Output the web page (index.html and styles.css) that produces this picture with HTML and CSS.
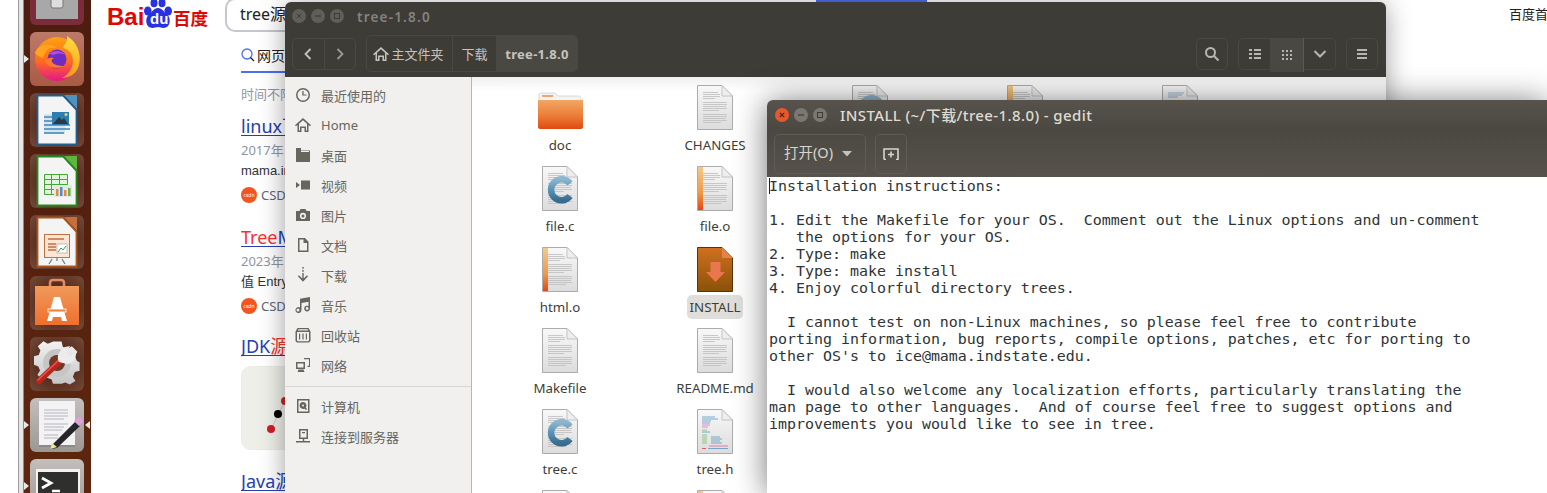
FILE: index.html
```html
<!DOCTYPE html>
<html lang="zh">
<head>
<meta charset="utf-8">
<title>tree-1.8.0</title>
<link rel="stylesheet" href="styles.css">
</head>
<body>
<svg class="defs" width="0" height="0" aria-hidden="true">
  <defs>
    <linearGradient id="paper" x1="0" y1="0" x2="0" y2="1"><stop offset="0" stop-color="#f8f8f8"/><stop offset="1" stop-color="#dcdcdc"/></linearGradient>
    <linearGradient id="stripe" x1="0" y1="0" x2="0" y2="1"><stop offset="0" stop-color="#f3c98a"/><stop offset=".6" stop-color="#ee9a4a"/><stop offset="1" stop-color="#e5480f"/></linearGradient>
    <linearGradient id="cblue" x1="0" y1="0" x2="0" y2="1"><stop offset="0" stop-color="#8db6cf"/><stop offset=".5" stop-color="#5a93b6"/><stop offset="1" stop-color="#396c8f"/></linearGradient>
    <linearGradient id="brown" x1="0" y1="0" x2="0" y2="1"><stop offset="0" stop-color="#d0701f"/><stop offset="1" stop-color="#8a5208"/></linearGradient>
    <linearGradient id="folder" x1="0" y1="0" x2="0" y2="1"><stop offset="0" stop-color="#f1a765"/><stop offset=".55" stop-color="#ec7c37"/><stop offset="1" stop-color="#df4a10"/></linearGradient>
    <linearGradient id="ffbody" x1="0" y1="0" x2="0" y2="1"><stop offset="0" stop-color="#ffa010"/><stop offset=".55" stop-color="#ff6a20"/><stop offset="1" stop-color="#e8158a"/></linearGradient>
    <linearGradient id="fftail" x1="0" y1="0" x2="0" y2="1"><stop offset="0" stop-color="#ffdc40"/><stop offset="1" stop-color="#ff9a1c"/></linearGradient>
    <linearGradient id="bag" x1="0" y1="0" x2="0" y2="1"><stop offset="0" stop-color="#f09a5c"/><stop offset="1" stop-color="#f06f2c"/></linearGradient>
    <linearGradient id="gear" x1="0" y1="0" x2="0" y2="1"><stop offset="0" stop-color="#f2f2f2"/><stop offset="1" stop-color="#c4c4c4"/></linearGradient>
    <symbol id="doc" viewBox="0 0 36 45">
      <path d="M.5.5H25L35.5 11V44.5H.5Z" fill="url(#paper)" stroke="#ababab"/>
      <path d="M25 .5V11H35.5Z" fill="#eeeeee" stroke="#c4c4c4"/>
    </symbol>
    <symbol id="lines" viewBox="0 0 36 45">
      <path d="M6 7.500h15M6 9.500h17M6 11.500h17M6 13.500h12M6 17.500h24M6 19.500h24M6 21.500h23M6 23.500h24M6 25.500h16M6 29.500h24M6 31.500h24M6 33.500h23M6 35.500h24M6 37.500h18" stroke="#bdbdbd" stroke-width=".8" fill="none"/>
    </symbol>
    <symbol id="cmark" viewBox="0 0 36 45">
      <path d="M28 17.500A10.500 10.500 0 1 0 28 30" fill="none" stroke="url(#cblue)" stroke-width="6.500"/>
    </symbol>
    <symbol id="sun" viewBox="0 0 16 16"><path d="M8 1a7 7 0 1 0 0 14A7 7 0 0 0 8 1Zm0 1.500a5.500 5.500 0 1 1 0 11 5.500 5.500 0 0 1 0-11ZM7.300 4v4.600H11.500V7.400H8.600V4Z"/></symbol>
    <symbol id="home" viewBox="0 0 16 16"><path d="M8 1 0 8.300l1 1 1.500-1.300V15h4v-4h3v4h4V8l1.500 1.300 1-1ZM4 6.800 8 3.200l4 3.600v6.700h-1v-4H5v4H4Z"/></symbol>
    <symbol id="desk" viewBox="0 0 16 16"><path d="M1 1h5v2.500h9V15H1Zm2 4h11V4H6v1Z"/></symbol>
    <symbol id="video" viewBox="0 0 16 16"><path d="M6 3.500h9v9H6ZM1 5l4 3-4 3Z"/></symbol>
    <symbol id="cam" viewBox="0 0 16 16"><path d="M5.500 2h5l1 2H15v10H1V4h3.500ZM8 5.800a3.100 3.100 0 1 0 0 6.200 3.100 3.100 0 0 0 0-6.200Zm0 1.600a1.500 1.500 0 1 1 0 3 1.500 1.500 0 0 1 0-3Z"/></symbol>
    <symbol id="file" viewBox="0 0 16 16"><path d="M3 1h7l3.500 3.500V15H3Zm1.500 1.500v11h7.500V6H8.500V2.500Z"/></symbol>
    <symbol id="down" viewBox="0 0 16 16"><path d="M7.300 0h1.400v1.800H7.300Zm0 3h1.400v1.800H7.300Zm0 3h1.400v5.500l3.300-3.300 1 1L8 14.800 2.900 9.200l1-1 3.400 3.300Z"/></symbol>
    <symbol id="music" viewBox="0 0 16 16"><path d="M5 1.800 15 0v11.500a2.900 2.900 0 1 1-1.500-2.500V4.800L6.500 6v7a3 3 0 1 1-1.500-2.500Zm-2 9.700a1.500 1.500 0 1 0 0 3 1.500 1.500 0 0 0 0-3Zm9.100-1.400a1.400 1.400 0 1 0 0 2.800 1.400 1.400 0 0 0 0-2.800Z"/></symbol>
    <symbol id="trash" viewBox="0 0 16 16"><path d="M2.500 1h11l2 3.500V14l-1.500 1.500H2L.5 14V4.500Zm1 1.300L2.700 3.500h10.600l-.8-1.200ZM2 5v8.500l.8.800h10.400l.8-.8V5Zm2 1.500h1.200v6H4Zm3.400 0h1.200v6H7.400Zm3.400 0H12v6h-1.200Z"/></symbol>
    <symbol id="net" viewBox="0 0 16 16"><path d="M9 1h6v9h-2.500V8.700H14V2.300H9Zm-8 4h9v7H1Zm1.500 1.400v4.200h6V6.400ZM3.500 12.500h5l1 2.500h-7Z"/></symbol>
    <symbol id="pc" viewBox="0 0 16 16"><path d="M2 1h12.500v14H2Zm1.500 1.500v11H13v-11ZM8 4a3.500 3.500 0 0 1 2.800 5.600L12 11l-1 1-1.500-1.300A3.500 3.500 0 1 1 8 4Zm0 2.600a1 1 0 1 0 0 2 1 1 0 0 0 0-2Z"/></symbol>
    <symbol id="srv" viewBox="0 0 16 16"><path d="M4 1h9v10H9.200v2H15v1.500H1V13h6.800v-2H4Zm1.500 1.500v7h6v-7ZM7 4h3v1.200H7Z"/></symbol>
    <symbol id="ctrl" viewBox="0 0 14 14"><circle cx="7" cy="7" r="7"/></symbol>
  </defs>
</svg>

<div class="strip"></div>

<nav class="launcher">
  <div class="tile tile-files">
    <svg viewBox="0 0 54 54" width="54" height="54"><rect x="6" y="-14" width="42" height="62" fill="url(#gear)" /><rect x="6" y="20" width="42" height="28" fill="#a8a8a8"/><rect x="21" y="26" width="12" height="11" rx="2" fill="#ddd" stroke="#777"/></svg>
  </div>
  <div class="tile tile-fox pip-l">
    <svg viewBox="0 0 54 54" width="54" height="54">
      <circle cx="27" cy="27" r="22" fill="url(#ffbody)"/>
      <path d="M37 4c1 6-3 8-4 12 8 2 12 10 9 19-2 5-6 9-10 11 8 0 15-5 17-13 2-8 0-15-3-20-2-4-6-7-9-9Z" fill="url(#fftail)"/>
      <path d="M5 21c2-6 8-9 14-8 3 0 6 1 8 3-5-1-9 0-11 3-1 2-2 4-3 7-3-1-6-2-8-5Z" fill="#ffa41c"/>
      <circle cx="27" cy="27" r="9.500" fill="#6e2cc2"/>
      <path d="M19 22c4-4 12-4 17 1-5-2-9-2-12 0Z" fill="#b14de0"/>
      <path d="M15 29c2 6 12 9 19 5-5 0-10-1-12-4-1-2 0-3 2-4-3-1-7 0-9 3Z" fill="#ff7a2a"/>
    </svg>
  </div>
  <div class="tile tile-dark">
    <svg viewBox="0 0 54 54" width="54" height="54">
      <path d="M7.500 2.500H33L46.500 17V51.500H7.500Z" fill="#f4f4f4" stroke="#1f5f8f" stroke-width="1.800"/>
      <path d="M34 2H47V16Z" fill="#4d93c2"/>
      <path d="M14 21h21v20H14z" fill="#d6e4ee"/>
      <path d="M14 24h17M14 28h17M14 32h26M14 36h26M14 40h20" stroke="#3d88ba" stroke-width="1.500"/>
      <rect x="22" y="19" width="17" height="13" fill="#2f7eb3"/>
      <path d="M23 31l6-7 3 3 2-2 4 6Z" fill="#2b3a3f"/><circle cx="36" cy="21.500" r="1.500" fill="#f2d24a"/>
    </svg>
  </div>
  <div class="tile tile-dark">
    <svg viewBox="0 0 54 54" width="54" height="54">
      <path d="M7.500 2.500H33L46.500 17V51.500H7.500Z" fill="#f4f4f4" stroke="#1f8c1f" stroke-width="1.800"/>
      <path d="M34 2H47V16Z" fill="#5cb83c"/>
      <path d="M14.500 20.500h23v20h-23zM14.500 25.500h23M14.500 30.500h23M14.500 35.500h23M21.500 20.500v20M29.500 20.500v20" fill="#e2f3dc" stroke="#48a53a"/>
      <rect x="24" y="31" width="18" height="12" fill="#e6e6e6"/>
      <path d="M26 42v-7h2.500v7Zm8 0v-6h2.500v6Z" fill="#e88a3c"/>
      <path d="M30 42v-9h2.500v9Z" fill="#4b8fc9"/><path d="M38 42v-8h2.500v8Z" fill="#62b84a"/>
    </svg>
  </div>
  <div class="tile tile-dark">
    <svg viewBox="0 0 54 54" width="54" height="54">
      <path d="M7.500 2.500H33L46.500 17V51.500H7.500Z" fill="#f4f4f4" stroke="#a9561d" stroke-width="1.800"/>
      <path d="M34 2H47V16Z" fill="#c4703c"/>
      <rect x="14.500" y="19.500" width="25" height="23" fill="#fbe6d5" stroke="#c0703c"/>
      <path d="M18 24h16M18 29h8M18 32h8M18 35h8" stroke="#c0703c" stroke-width="1.500"/>
      <rect x="27" y="29" width="10" height="9" fill="#fff" stroke="#999" stroke-width=".6"/>
      <path d="M28 37l3-4 2 2 3-4" fill="none" stroke="#4a9a3a"/>
      <path d="M22 44l-3 5M32 44l3 5M27 43v3" stroke="#777" stroke-width="1.200"/>
    </svg>
  </div>
  <div class="tile tile-dark">
    <svg viewBox="0 0 54 54" width="54" height="54">
      <path d="M20 11V7c0-2 1-3 3-3h8c2 0 3 1 3 3v4" fill="none" stroke="#e58a65" stroke-width="2.500"/>
      <path d="M5 10H49V49H5Z" fill="url(#bag)"/>
      <path d="M17 45 24 21h6l7 24h-5l-1-4h-8l-1 4Z" fill="#fff"/>
      <rect x="18" y="33" width="18" height="3" fill="#f4843f" stroke="#fff" stroke-width=".8"/>
    </svg>
  </div>
  <div class="tile tile-dark">
    <svg viewBox="0 0 54 54" width="54" height="54">
      <path d="M22 3h10l1.500 6 5.500 2.300 5-3 6.500 6.500-3 5.200L50 25.500l3 1.500v10l-5.500 1.500-2.300 5.300 3 5-6.700 4.200-5-2.500-4.500 1.500H22l-1.500-5-5.500-2-5 3-6-6.500 3-5L5 32l-5-2V20l5.500-1.500 2-5-3-5 6.500-6 5 3 5-2Z" fill="url(#gear)" transform="translate(4 2) scale(.86)"/>
      <circle cx="27" cy="26" r="14" fill="#c6c6c6"/>
      <circle cx="27" cy="26" r="8" fill="#6a3a2a"/>
      <path d="M9 44 31 23" stroke="#b8261e" stroke-width="6" stroke-linecap="round"/>
      <path d="M8 43 30 22" stroke="#e4574a" stroke-width="1.500" stroke-linecap="round"/>
      <path d="M29 25c-3-5 0-12 6-15l5-1-3 6 3 4 6-3c0 6-3 11-9 11Z" fill="#ececec"/>
    </svg>
  </div>
  <div class="tile tile-light pip-l pip-r">
    <svg viewBox="0 0 54 54" width="54" height="54">
      <path d="M9 5H45V49H9Z" fill="#8d8986"/>
      <rect x="9" y="3" width="36" height="44" fill="#f3f3f6"/>
      <path d="M14 12h24M14 15h24M14 18h24M14 21h20M14 26h24M14 29h20M14 32h18M14 37h14M14 40h14" stroke="#b5b5ba" stroke-width="1"/>
      <path d="M22 47 45 24l5 4-23 22-6 1Z" fill="#26262a"/>
      <path d="M20.500 51l1.500-6 5 4Z" fill="#f0e79a"/>
      <path d="M44 23l3-3c1-1 3-1 4 0l1 1c1 1 1 3 0 4l-3 3Z" fill="#e0a0dc"/>
    </svg>
  </div>
  <div class="tile tile-light pip-l">
    <svg viewBox="0 0 54 54" width="54" height="54">
      <rect x="6" y="10" width="44" height="44" fill="#f2f2f2"/>
      <rect x="8" y="13" width="40" height="41" fill="#2f2f2d"/>
      <path d="M12 19l9 5-9 5" fill="none" stroke="#fff" stroke-width="2.800"/>
      <path d="M22 32h8" stroke="#fff" stroke-width="2.500"/>
    </svg>
  </div>
</nav>

<main class="baidu">
  <header class="bd-head">
    <div class="logo">
      <span class="logo-txt">Bai</span>
      <span class="paw">
        <svg viewBox="0 0 28 28" width="28" height="28"><ellipse cx="3.800" cy="11" rx="3.800" ry="4.600" fill="#2932e1"/><ellipse cx="10" cy="3" rx="3.500" ry="4.300" fill="#2932e1"/><ellipse cx="18" cy="3" rx="3.500" ry="4.300" fill="#2932e1"/><ellipse cx="24.200" cy="11" rx="3.800" ry="4.600" fill="#2932e1"/><path d="M14 8c4.500 0 5.500 4 9 6.500 4.500 3.500 3.500 13.500-3.500 13.500-2 0-3.500-1-5.500-1s-3.500 1-5.500 1C1.500 28 .5 18 5 14.500 8.500 12 9.500 8 14 8Z" fill="#2932e1"/></svg>
        <span class="paw-du">du</span>
      </span>
      <span class="logo-zh">百度</span>
    </div>
    <div class="search-box">tree源</div>
    <div class="search-btn"></div>
    <div class="bd-link">百度首</div>
  </header>
  <div class="results">
    <div class="tab"><svg viewBox="0 0 14 14" width="14" height="14"><circle cx="6" cy="6" r="5" fill="none" stroke="#4e6ef2" stroke-width="1.300"/><path d="M9.500 9.500 13 13" stroke="#222" stroke-width="1.300"/></svg><span>网页</span></div>
    <div class="filter">时间不限</div>
    <a class="r-title">linux下</a>
    <div class="r-meta">2017年</div>
    <div class="r-abs">mama.in</div>
    <div class="r-src"><span class="csdn">csdn</span>CSDN</div>
    <a class="r-title second"><em>Tree</em>M</a>
    <div class="r-meta">2023年</div>
    <div class="r-abs">值 Entry</div>
    <div class="r-src"><span class="csdn">csdn</span>CSDN</div>
    <a class="r-title third">JDK<em>源</em></a>
    <div class="thumb">
      <svg viewBox="0 0 60 84" width="60" height="84"><path d="M29 62 43 34" stroke="#c9c9c4"/><circle cx="43" cy="34" r="4" fill="#cf1f25"/><circle cx="36" cy="47" r="4" fill="#000"/><circle cx="29" cy="62" r="4" fill="#cf1f25"/></svg>
    </div>
    <a class="r-title fourth">Java源</a>
  </div>
</main>

<section class="win nautilus">
  <div class="n-title">
    <div class="ctrls dim">
      <svg viewBox="0 0 14 14" width="14" height="14"><use href="#ctrl"/><path d="M4.800 4.800l4.400 4.400M9.200 4.800 4.800 9.200" stroke="#3e3c37"/></svg>
      <svg viewBox="0 0 14 14" width="14" height="14"><use href="#ctrl"/><path d="M4 7h6" stroke="#3e3c37" stroke-width="1.200"/></svg>
      <svg viewBox="0 0 14 14" width="14" height="14"><use href="#ctrl"/><rect x="4.500" y="4.500" width="5" height="5" fill="none" stroke="#3e3c37"/></svg>
    </div>
    <span class="n-name">tree-1.8.0</span>
  </div>
  <div class="n-bar">
    <div class="group nav">
      <div class="seg"><svg viewBox="0 0 10 14" width="10" height="14"><path d="M7.500 2 2.500 7l5 5" fill="none" stroke="#c6c3bc" stroke-width="1.800"/></svg></div>
      <div class="seg"><svg viewBox="0 0 10 14" width="10" height="14"><path d="M2.500 2l5 5-5 5" fill="none" stroke="#9d9a94" stroke-width="1.800"/></svg></div>
    </div>
    <div class="group path">
      <div class="seg p1"><svg viewBox="0 0 16 16" width="16" height="16"><use href="#home" fill="#c6c3bc"/></svg>主文件夹</div>
      <div class="seg p2">下载</div>
      <div class="seg p3">tree-1.8.0</div>
    </div>
    <div class="group search">
      <div class="seg"><svg viewBox="0 0 16 16" width="16" height="16"><circle cx="6.500" cy="6.500" r="4.500" fill="none" stroke="#b9b6af" stroke-width="2"/><path d="M10 10l4.500 4.500" stroke="#b9b6af" stroke-width="2"/></svg></div>
    </div>
    <div class="group view">
      <div class="seg v-side"><svg viewBox="0 0 12 12" width="12" height="12"><path d="M0 1h3v2H0zM5 1h7v2H5zM0 5h3v2H0zM5 5h7v2H5zM0 9h3v2H0zM5 9h7v2H5z" fill="#b9b6af"/></svg></div>
      <div class="seg v-on"><svg viewBox="0 0 12 12" width="12" height="12"><path d="M1 1h2v2H1zM5 1h2v2H5zM9 1h2v2H9zM1 5h2v2H1zM5 5h2v2H5zM9 5h2v2H9zM1 9h2v2H1zM5 9h2v2H5zM9 9h2v2H9z" fill="#b9b6af"/></svg></div>
      <div class="seg v-side"><svg viewBox="0 0 14 10" width="14" height="10"><path d="M1.500 2 7 7.500 12.500 2" fill="none" stroke="#b9b6af" stroke-width="2"/></svg></div>
    </div>
    <div class="group menu">
      <div class="seg"><svg viewBox="0 0 12 12" width="12" height="12"><path d="M1 1h10v2H1zM1 5h10v2H1zM1 9h10v2H1z" fill="#b9b6af"/></svg></div>
    </div>
  </div>
  <div class="n-body">
    <aside class="side">
      <div class="s-row"><svg viewBox="0 0 16 16" width="16" height="16"><use href="#sun"/></svg>最近使用的</div>
      <div class="s-row"><svg viewBox="0 0 16 16" width="16" height="16"><use href="#home"/></svg>Home</div>
      <div class="s-row"><svg viewBox="0 0 16 16" width="16" height="16"><use href="#desk"/></svg>桌面</div>
      <div class="s-row"><svg viewBox="0 0 16 16" width="16" height="16"><use href="#video"/></svg>视频</div>
      <div class="s-row"><svg viewBox="0 0 16 16" width="16" height="16"><use href="#cam"/></svg>图片</div>
      <div class="s-row"><svg viewBox="0 0 16 16" width="16" height="16"><use href="#file"/></svg>文档</div>
      <div class="s-row"><svg viewBox="0 0 16 16" width="16" height="16"><use href="#down"/></svg>下载</div>
      <div class="s-row"><svg viewBox="0 0 16 16" width="16" height="16"><use href="#music"/></svg>音乐</div>
      <div class="s-row"><svg viewBox="0 0 16 16" width="16" height="16"><use href="#trash"/></svg>回收站</div>
      <div class="s-row"><svg viewBox="0 0 16 16" width="16" height="16"><use href="#net"/></svg>网络</div>
      <div class="s-sep"></div>
      <div class="s-row"><svg viewBox="0 0 16 16" width="16" height="16"><use href="#pc"/></svg>计算机</div>
      <div class="s-row"><svg viewBox="0 0 16 16" width="16" height="16"><use href="#srv"/></svg>连接到服务器</div>
    </aside>
    <div class="files">
      <div class="f"><svg class="ic" viewBox="0 0 46 45" width="46" height="45">
        <path d="M2 16V10c0-1 .5-2 1.500-2H18l3 3h21c1 0 2 1 2 2v3Z" fill="#f4f4f2" stroke="#d0d0cc" stroke-width=".8"/>
        <rect x="5" y="10" width="11" height="2" fill="#f0a576"/>
        <path d="M1 15H46V42c0 1-1 2-2 2H3c-1 0-2-1-2-2Z" fill="url(#folder)"/>
      </svg><span class="lb">doc</span></div>
      <div class="f"><svg class="ic" viewBox="0 0 36 45" width="36" height="45"><use href="#doc"/><use href="#lines"/></svg><span class="lb">CHANGES</span></div>
      <div class="f"><svg class="ic" viewBox="0 0 36 45" width="36" height="45"><use href="#doc"/><use href="#lines"/><use href="#cmark"/></svg></div>
      <div class="f"><svg class="ic" viewBox="0 0 36 45" width="36" height="45"><use href="#doc"/><use href="#lines"/><rect x="1" y="1" width="5" height="43" fill="url(#stripe)"/></svg></div>
      <div class="f"><svg class="ic" viewBox="0 0 36 45" width="36" height="45"><use href="#doc"/><path d="M6 8h16M6 10h14M6 12h10" stroke="#7ba7c8" stroke-width=".8"/></svg></div>

      <div class="f"><svg class="ic" viewBox="0 0 36 45" width="36" height="45"><use href="#doc"/><use href="#lines"/><use href="#cmark"/></svg><span class="lb">file.c</span></div>
      <div class="f"><svg class="ic" viewBox="0 0 36 45" width="36" height="45"><use href="#doc"/><use href="#lines"/><rect x="1" y="1" width="5" height="43" fill="url(#stripe)"/></svg><span class="lb">file.o</span></div>
      <div class="f"></div><div class="f"></div><div class="f"></div>

      <div class="f"><svg class="ic" viewBox="0 0 36 45" width="36" height="45"><use href="#doc"/><use href="#lines"/><rect x="1" y="1" width="5" height="43" fill="url(#stripe)"/></svg><span class="lb">html.o</span></div>
      <div class="f"><svg class="ic" viewBox="0 0 36 45" width="36" height="45"><path d="M.5.5H25L35.500 11V44.500H.5Z" fill="url(#brown)" stroke="#54340a"/><path d="M25 .5V11H35.500Z" fill="#e8804a"/><path d="M13.500 15h10v10H28l-9.500 10L9 25h4.500Z" fill="#e9764c"/></svg><span class="lb sel">INSTALL</span></div>
      <div class="f"></div><div class="f"></div><div class="f"></div>

      <div class="f"><svg class="ic" viewBox="0 0 36 45" width="36" height="45"><use href="#doc"/><use href="#lines"/></svg><span class="lb">Makefile</span></div>
      <div class="f"><svg class="ic" viewBox="0 0 36 45" width="36" height="45"><use href="#doc"/><use href="#lines"/></svg><span class="lb">README.md</span></div>
      <div class="f"></div><div class="f"></div><div class="f"></div>

      <div class="f"><svg class="ic" viewBox="0 0 36 45" width="36" height="45"><use href="#doc"/><use href="#lines"/><use href="#cmark"/></svg><span class="lb">tree.c</span></div>
      <div class="f"><svg class="ic" viewBox="0 0 36 45" width="36" height="45"><use href="#doc"/>
        <g stroke-width=".8"><path d="M5 8h13M5 10h16M5 12h9M5 14h8M5 23h8" stroke="#5c94bf"/><path d="M5 16h8M5 18h6" stroke="#d86fd0"/><path d="M5 21h5M5 26h5M5 28h5M5 30h5M5 32h5M5 34h5" stroke="#79c06a"/><path d="M14 28h9M14 30h11M14 32h9M14 34h11" stroke="#5c94bf"/><path d="M12 37h19" stroke="#e0609a"/><path d="M5 39.500h4" stroke="#e63a2a"/><path d="M11 39.500h20" stroke="#5c94bf"/></g>
      </svg><span class="lb">tree.h</span></div>
      <div class="f"></div><div class="f"></div><div class="f"></div>

      <div class="f"><svg class="ic" viewBox="0 0 36 45" width="36" height="45"><use href="#doc"/></svg></div>
      <div class="f"><svg class="ic" viewBox="0 0 36 45" width="36" height="45"><use href="#doc"/><rect x="1" y="1" width="5" height="43" fill="url(#stripe)"/></svg></div>
    </div>
  </div>
</section>

<section class="win gedit">
  <div class="g-title">
    <div class="ctrls">
      <svg class="red" viewBox="0 0 14 14" width="14" height="14"><use href="#ctrl"/><path d="M4.800 4.800l4.400 4.400M9.200 4.800 4.800 9.200" stroke="#3e2a20" stroke-width="1.200"/></svg>
      <svg class="grey" viewBox="0 0 14 14" width="14" height="14"><use href="#ctrl"/><path d="M4 7h6" stroke="#3e3c37" stroke-width="1.200"/></svg>
      <svg class="grey" viewBox="0 0 14 14" width="14" height="14"><use href="#ctrl"/><rect x="4.500" y="4.500" width="5" height="5" fill="none" stroke="#3e3c37"/></svg>
    </div>
    <span class="g-name">INSTALL (~/下载/tree-1.8.0) - gedit</span>
  </div>
  <div class="g-bar">
    <div class="g-btn open"><span class="open-txt">打开(O)</span><svg viewBox="0 0 10 6" width="10" height="6"><path d="M0 0h10L5 5.500Z" fill="#c6c3bc"/></svg></div>
    <div class="g-btn add"><svg viewBox="0 0 16 12" width="16" height="12"><path d="M1 11.500V1h14v10.500h-2M1 11.500h2M8 3.500v6M5 6.500h6" fill="none" stroke="#d8d5ce" stroke-width="1.600"/></svg></div>
  </div>
  <div class="g-body">
    <span class="caret"></span>
<pre class="doc-text">Installation instructions:

1. Edit the Makefile for your OS.  Comment out the Linux options and un-comment
   the options for your OS.
2. Type: make
3. Type: make install
4. Enjoy colorful directory trees.

  I cannot test on non-Linux machines, so please feel free to contribute
porting information, bug reports, compile options, patches, etc for porting to
other OS's to ice@mama.indstate.edu.

  I would also welcome any localization efforts, particularly translating the
man page to other languages.  And of course feel free to suggest options and
improvements you would like to see in tree.</pre>
  </div>
</section>
</body>
</html>
```
FILE: styles.css
```css
* { box-sizing: border-box; }
html, body { height: 100%; }
body {
  margin: 0;
  display: flex;
  overflow: hidden;
  background: #fff;
  font-family: "Noto Sans", "Noto Sans CJK SC", sans-serif;
  padding-left: 18px;
}
.defs { position: absolute; }

/* launcher */
.strip {
  flex: none;
  width: 6px;
  background: #e6e6e6;
  border-left: 1px solid #9a9a9a;
  border-right: 1px solid #8c8c8c;
}
.launcher {
  flex: none;
  width: 67px;
  height: 522px;
  margin-top: -29px;
  padding: 0 6px;
  display: flex;
  flex-direction: column;
  gap: 7px;
  background: linear-gradient(#4b1c10, #5e260e);
}
.tile {
  position: relative;
  flex: none;
  width: 54px;
  height: 54px;
  border-radius: 6px;
  overflow: visible;
}
.tile svg { display: block; border-radius: 6px; }
.tile-files { background: #7a2c3a; }
.tile-fox { background: linear-gradient(#bd7a68, #a85a44); }
.tile-dark { background: radial-gradient(circle at 50% 50%, #4e2416 30%, #744a3a 100%); }
.tile-light { background: linear-gradient(#c4bfbc, #9d9794); }
.pip-l::before, .pip-r::after {
  content: "";
  position: absolute;
  top: 23px;
  border: 4px solid transparent;
}
.pip-l::before { left: -6px; border-left: 5px solid #e8e8e8; border-right: 0; }
.pip-r::after { right: -6px; border-right: 5px solid #e8e8e8; border-left: 0; }

/* baidu page behind the windows */
.baidu { flex: none; width: 1456px; }
.bd-head { display: flex; height: 32px; }
.logo { flex: none; width: 101px; height: 28px; margin-left: 16px; display: flex; align-items: flex-end; color: #e10601; font-weight: 700; font-family: "Liberation Sans", sans-serif; }
.logo-txt { font-size: 24px; line-height: 22px; width: 37px; }
.paw { position: relative; flex: none; width: 28px; height: 28px; }
.paw svg { display: block; }
.paw-du { position: absolute; left: 6px; top: 11px; font-size: 15px; line-height: 16px; color: #fff; font-weight: 700; }
.logo-zh { font-family: "Noto Sans CJK SC", sans-serif; font-size: 17.500px; line-height: 20px; font-weight: 700; margin-left: 1px; white-space: nowrap; }
.search-box {
  flex: none;
  width: 591px;
  height: 34px;
  margin: -2px 0 0 17px;
  padding-left: 13px;
  border: 2px solid #c4c7ce;
  border-right: 0;
  border-radius: 10px 0 0 10px;
  font-size: 16px;
  line-height: 28px;
  color: #222;
}
.search-btn { flex: none; width: 111px; height: 34px; margin-top: -2px; background: #4e6ef2; }
.bd-link { flex: none; margin: 5px 0 0 582px; width: 39px; font-size: 13px; line-height: 18px; color: #222; white-space: nowrap; }
.results { margin-left: 150px; width: 44px; overflow: hidden; white-space: nowrap; }
.tab { display: flex; align-items: center; gap: 2px; width: 80px; height: 24px; margin-top: 11px; font-size: 14px; color: #222; }
.tab svg { flex: none; }
.filter { margin-top: 4px; padding-top: 14px; font-size: 13px; line-height: 18px; color: #9195a3; position: relative; }
.filter::before { content: ""; position: absolute; left: 0; top: 0; width: 80px; height: 2px; background: #4e6ef2; }
.r-title { display: block; width: max-content; margin-top: 11px; font-size: 18px; line-height: 24px; color: #2440b3; border-bottom: 1px solid #2440b3; height: 22px; }
.r-title em { font-style: normal; color: #f73131; }
.r-title.second { margin-top: 22px; }
.r-title.third { margin-top: 20px; }
.r-title.fourth { margin-top: 19px; }
.r-meta { margin-top: 5px; font-size: 13px; line-height: 18px; color: #9195a3; }
.r-abs { margin-top: 3px; font-size: 13px; line-height: 18px; color: #333; font-family: "Liberation Sans", "Noto Sans CJK SC", sans-serif; }
.r-src { display: flex; align-items: center; gap: 4px; height: 16px; margin-top: 7px; font-size: 13px; color: #626675; }
.csdn { flex: none; width: 16px; height: 16px; border-radius: 50%; background: #f4541e; color: #fff; font-size: 5px; line-height: 16px; text-align: center; }
.thumb { width: 200px; height: 84px; margin-top: 10px; background: #efefe9; border-radius: 10px; border: 1px solid #eaeae6; }
.thumb svg { display: block; }

/* windows on the desktop */
.win {
  position: absolute;
  border-radius: 6px 6px 0 0;
}
.nautilus {
  left: 285px;
  top: 2px;
  width: 1101px;
  height: 491px;
  background: #fff;
  box-shadow: 0 3px 26px rgba(0, 0, 0, .38);
}
.n-title {
  display: flex;
  align-items: center;
  height: 28px;
  padding-left: 7px;
  background: #3e3c37;
  border-radius: 6px 6px 0 0;
}
.ctrls { display: flex; gap: 5px; }
.ctrls svg { display: block; }
.dim svg { fill: #605e5a; }
.n-name { margin-left: 13px; font-size: 13.500px; font-weight: 600; letter-spacing: 1.200px; color: #85837e; line-height: 28px; padding-top: 2px; }
.n-bar {
  display: flex;
  align-items: center;
  gap: 10px;
  height: 47px;
  padding: 0 8px 0 7px;
  background: #3e3c37;
}
.group { display: flex; height: 32px; border: 1px solid #4a4843; border-radius: 5px; flex: none; }
.seg { display: flex; align-items: center; justify-content: center; flex: 1; height: 100%; font-size: 13px; color: #c6c3bc; }
.seg + .seg { border-left: 1px solid #4a4843; }
.nav { width: 64px; }
.search { width: 32px; margin-left: auto; }
.menu { width: 32px; }
.view { width: 98px; }
.path { width: 212px; height: 37px; overflow: hidden; }
.p1 { flex: none; width: 85px; gap: 2px; padding-right: 2px; }
.p2 { flex: none; width: 44px; }
.p3 { flex: none; width: 81px; background: #4a4843; font-weight: 700; letter-spacing: .3px; }
.v-side { flex: none; width: 31px; }
.v-on { flex: none; width: 34px; height: 34px; margin-top: -1px; background: #4a4843; border-left: 1px solid #5c5a55; border-right: 1px solid #5c5a55; }
.v-on + .seg { border-left: 0; }
.n-body { display: flex; height: 416px; background: #fff; }
.side {
  flex: none;
  width: 187px;
  padding-top: 3px;
  background: #f1f0ee;
  border-right: 1px solid #b8b6b3;
}
.s-row { display: flex; align-items: center; gap: 10px; height: 30px; padding-left: 10px; font-size: 13px; color: #66665f; }
.s-row svg { flex: none; fill: #66665f; }
.s-sep { height: 1px; margin: 6px 0 4px; background: #d8d6d3; }
.files {
  display: grid;
  grid-template-columns: repeat(5, 155px);
  grid-auto-rows: 81px;
  align-content: start;
  padding: 8px 0 0 10.500px;
  background: linear-gradient(#f0f0f0, #fff 14px);
  flex: 1;
  overflow: hidden;
}
.f { display: flex; flex-direction: column; align-items: center; }
.ic { display: block; flex: none; }
.lb { margin-top: 3px; padding: 3px; border-radius: 5px; font-size: 13.300px; line-height: 18px; color: #3d3d3a; white-space: nowrap; }
.sel { background: #dfdedb; }

.gedit {
  left: 767px;
  top: 100px;
  width: 780px;
  height: 393px;
  background: #fff;
  box-shadow: 0 2px 32px rgba(0, 0, 0, .55);
}
.g-title {
  display: flex;
  align-items: center;
  height: 30px;
  padding-left: 8px;
  background: linear-gradient(#57534c, #4b4842);
  border-radius: 6px 0 0 0;
}
.red { fill: #e9582a; }
.grey { fill: #7b7872; }
.g-name { margin-left: 13px; font-size: 15px; font-weight: 500; letter-spacing: .4px; line-height: 26px; color: #dfdbd2; white-space: nowrap; }
.g-bar {
  display: flex;
  align-items: center;
  gap: 9px;
  height: 47px;
  padding-left: 7px;
  background: linear-gradient(#4b4842, #57534c);
}
.g-btn { display: flex; align-items: center; height: 40px; border: 1px solid #5f5c55; border-radius: 5px; color: #d8d5ce; }
.open { width: 92px; padding-left: 9px; gap: 9px; }
.open-txt { font-size: 14.500px; line-height: 18px; padding-bottom: 3px; white-space: nowrap; }
.add { width: 32px; justify-content: center; }
.g-body { position: relative; height: 316px; background: #fff; padding-left: 2px; }
.caret { position: absolute; left: 2px; top: 1px; width: 1px; height: 16px; background: #222; }
.doc-text {
  margin: 0;
  padding-top: 1px;
  font-family: "DejaVu Sans Mono", monospace;
  font-size: 14.950px;
  line-height: 17px;
  color: #2e3436;
}
```
